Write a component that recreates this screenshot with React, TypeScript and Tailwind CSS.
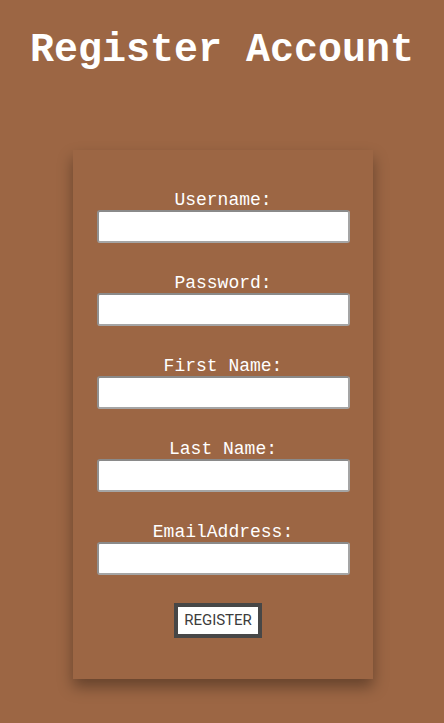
function Field(props: { label: string; type?: string }) {
  return (
    <div className="flex flex-col items-center">
      <label className="text-[18px] leading-[20px] text-white">{props.label}</label>
      <input
        type={props.type || "text"}
        className="w-[253px] h-[33px] bg-white border-2 border-[#a5a5a5] border-t-[#8a8a8a] border-l-[#909090] rounded-[3px] px-1 text-black"
      />
    </div>
  )
}

export default function App() {
  return (
    <div className="min-h-[723px] bg-[#9c6644] flex flex-col items-center font-['Liberation_Mono',monospace] pb-10">
      <h1 className="text-[40px] font-bold text-white leading-[48px] mt-[27px]">Register Account</h1>
      <div className="mt-[75px] ml-[2px] w-[300px] bg-[#9c6644] shadow-[0_8px_14px_rgba(0,0,0,0.35)] pt-[40px] pb-[41px] flex flex-col items-center">
        <div className="flex flex-col gap-[30px]">
          <Field label="Username:" />
          <Field label="Password:" type="password" />
          <Field label="First Name:" />
          <Field label="Last Name:" />
          <Field label="EmailAddress:" type="email" />
        </div>
        <button className="mt-[28px] ml-[-10px] w-[88px] h-[35px] border-4 border-[#474747] bg-white text-[#3c3c3c] text-[15px] font-['Roboto',sans-serif]">
          REGISTER
        </button>
      </div>
    </div>
  )
}
